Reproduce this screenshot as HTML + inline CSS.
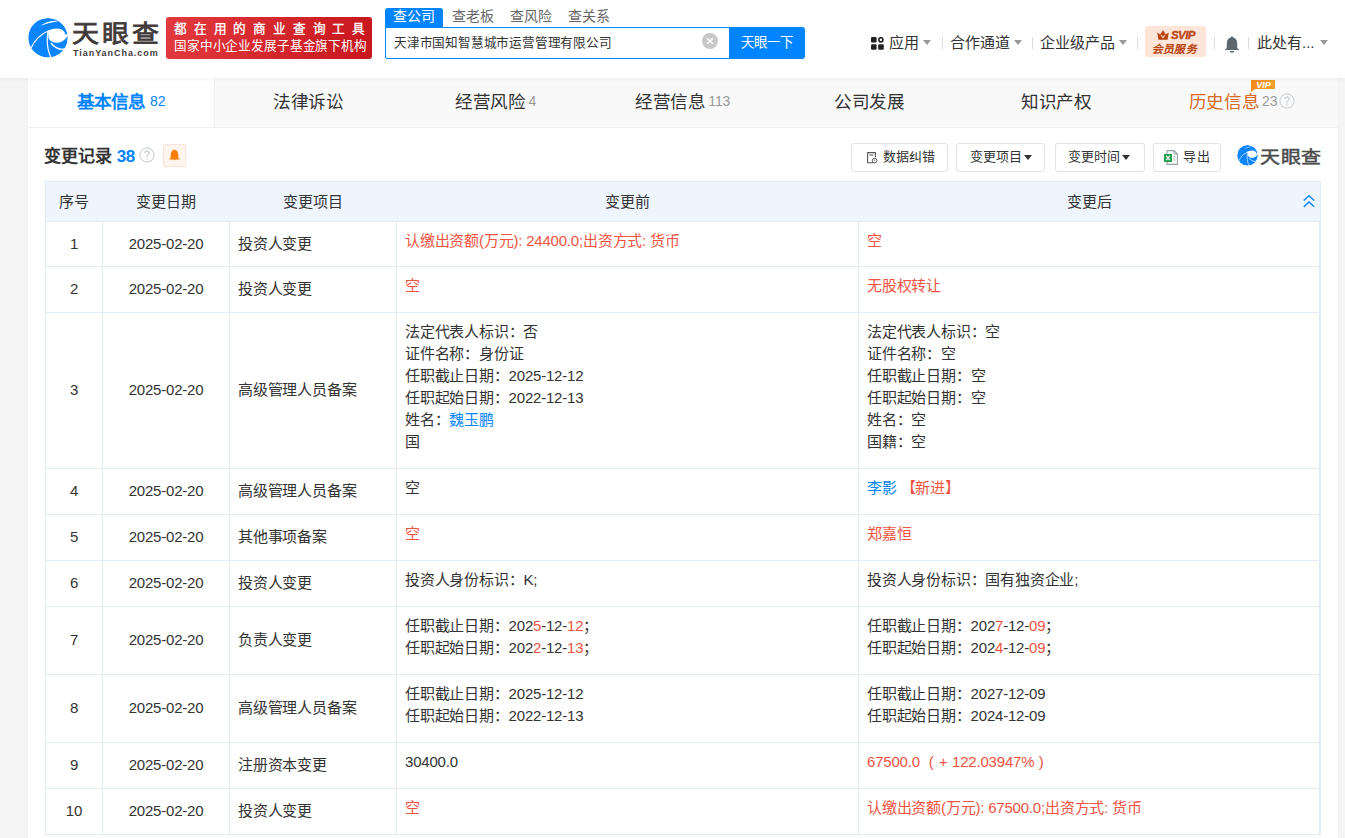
<!DOCTYPE html>
<html lang="zh-CN"><head><meta charset="utf-8">
<style>
*{box-sizing:border-box;margin:0;padding:0}
html,body{width:1345px;height:838px;overflow:hidden}
body{background:#f5f5f5;font-family:"Liberation Sans",sans-serif;color:#333;font-size:14px;position:relative}
.abs{position:absolute;white-space:nowrap}
#hdr{position:absolute;left:0;top:0;width:1345px;height:78px;background:#fff;box-shadow:0 1px 5px rgba(0,0,0,.06);z-index:2}
#wrap{position:absolute;left:28px;top:78px;width:1310px;height:760px;background:#fff;box-shadow:0 0 2px rgba(0,0,0,.06)}
#tabs{position:absolute;left:0;top:0;width:1310px;height:50px;background:#f9f9f9;border-bottom:1px solid #f0f0f0}
.tab{position:absolute;top:0;height:49px;line-height:48px;text-align:center;font-size:17.6px;color:#333;letter-spacing:-0.4px}
.tab .n{font-size:14px;color:#999;margin-left:3px;position:relative;top:-2px;letter-spacing:-0.2px}
.caret{width:0;height:0;border-left:4px solid transparent;border-right:4px solid transparent;border-top:5px solid #999}
.sep{width:1px;height:12px;background:#ddd}
.nav{font-size:15px;line-height:18px;color:#333}
table{position:absolute;left:17px;top:103px;border-collapse:collapse;table-layout:fixed;width:1275px}
td,th{border:1px solid #e3ecf5;font-size:15px;font-weight:normal;color:#333;letter-spacing:-0.2px}
th{background:#eef5fc;height:40px;border-left:none;border-right:none;line-height:20px}
td{line-height:22px;padding:8px 8px 15px 8px;vertical-align:top}
td.c{text-align:center;vertical-align:middle;padding:0 0 1px 0}
td.m{vertical-align:middle;padding:0 8px 1px 8px}
.red{color:#f0533f}
.blue{color:#0084ff}
.btn{position:absolute;top:65px;height:29px;border:1px solid #e3e3e3;border-radius:3px;background:#fff;font-size:13px;line-height:27px;color:#333}
.qm{width:15px;height:15px;border:1px solid #c9cdd3;border-radius:50%;color:#b7bcc2;font-size:11px;line-height:13px;text-align:center}
</style></head><body>
<svg width="0" height="0" style="position:absolute">
<defs>
<clipPath id="cc"><circle cx="23" cy="23.3" r="19.8"/></clipPath>
<symbol id="logo" viewBox="3 3.5 40 40">
<g clip-path="url(#cc)">
<circle cx="23" cy="23.3" r="19.8" fill="#0a84ff"/>
<path d="M15.5 11.2 Q24 5.2 34 6.4 Q24 8 15.5 11.2Z" fill="#fff"/>
<path d="M23 16.2 Q30 12.6 35.5 14.6 Q40.6 17 39.8 19.9 L46 19.2 L46 20 L43 21.3 Q38.5 27.8 32.5 28.3 Q26.5 28.4 23.5 24 Z" fill="#fff"/>
<path d="M6 33.5 Q12 21 24.2 16" stroke="#fff" stroke-width="1.2" fill="none"/>
<path d="M23 17 Q20.5 33 26.5 44" stroke="#fff" stroke-width="1.2" fill="none"/>
<path d="M26 28.5 Q30 34 37 35 Q40 35 43 32" stroke="#fff" stroke-width="1.3" fill="none"/>
</g>
</symbol>
</defs>
</svg>
<div id="hdr">
  <svg class="abs" style="left:28px;top:18px" width="40" height="40"><use href="#logo"/></svg>
  <div class="abs" style="left:72px;top:20px;font-size:27px;line-height:30px;color:#3f3a39;-webkit-text-stroke:0.9px #3f3a39;letter-spacing:3px;transform:scaleY(0.9);transform-origin:0 0">天眼查</div>
  <div class="abs" style="left:73px;top:48px;font-size:9px;line-height:10px;font-weight:bold;color:#3f3a39;letter-spacing:0.95px">TianYanCha.com</div>
  <div class="abs" style="left:166px;top:17px;width:206px;height:42px;border-radius:3px;background:linear-gradient(100deg,#e2393f,#c8161d)">
    <div class="abs" style="left:8px;top:4px;font-size:12.6px;line-height:16px;color:#fff;letter-spacing:6.8px;-webkit-text-stroke:0.3px #fff">都在用的商业查询工具</div>
    <div class="abs" style="left:8px;top:21px;font-size:12.6px;line-height:16px;color:#fff;letter-spacing:-0.15px">国家中小企业发展子基金旗下机构</div>
  </div>
  <!-- search -->
  <div class="abs" style="left:385px;top:8px;width:58px;height:20px;background:#0084ff;border-radius:3px 3px 0 0;color:#fff;font-size:14px;line-height:17px;text-align:center">查公司</div>
  <div class="abs" style="left:452px;top:8px;font-size:14px;line-height:17px;color:#666">查老板</div>
  <div class="abs" style="left:510px;top:8px;font-size:14px;line-height:17px;color:#666">查风险</div>
  <div class="abs" style="left:568px;top:8px;font-size:14px;line-height:17px;color:#666">查关系</div>
  <div class="abs" style="left:385px;top:27px;width:350px;height:32px;border:1px solid #0084ff;border-radius:2px;background:#fff"></div>
  <div class="abs" style="left:394px;top:34px;font-size:12.6px;line-height:18px;color:#333;letter-spacing:-0.2px">天津市国知智慧城市运营管理有限公司</div>
  <div class="abs" style="left:702px;top:33px;width:16px;height:16px;border-radius:50%;background:#c8c8c8"></div>
  <svg class="abs" style="left:702px;top:33px" width="16" height="16"><path d="M5.2 5.2L10.8 10.8M10.8 5.2L5.2 10.8" stroke="#fff" stroke-width="1.4"/></svg>
  <div class="abs" style="left:729px;top:27px;width:76px;height:32px;background:#0084ff;border-radius:0 3px 3px 0;color:#fff;font-size:13.5px;line-height:32px;text-align:center">天眼一下</div>
  <!-- right nav -->
  <svg class="abs" style="left:871px;top:37px" width="13" height="13" viewBox="0 0 13 13">
    <rect x="0" y="0" width="5.6" height="5.6" rx="1.3" fill="#222"/>
    <circle cx="9.9" cy="2.8" r="2.05" stroke="#1c1f23" stroke-width="1.6" fill="none"/>
    <rect x="0" y="7.2" width="5.6" height="5.6" rx="1.3" fill="#222"/>
    <rect x="7.2" y="7.2" width="5.6" height="5.6" rx="1.3" fill="#222"/>
  </svg>
  <div class="abs nav" style="left:889px;top:34px">应用</div>
  <div class="abs caret" style="left:923px;top:40px"></div>
  <div class="abs sep" style="left:942px;top:37px"></div>
  <div class="abs nav" style="left:950px;top:34px">合作通道</div>
  <div class="abs caret" style="left:1014px;top:40px"></div>
  <div class="abs sep" style="left:1032px;top:37px"></div>
  <div class="abs nav" style="left:1040px;top:34px">企业级产品</div>
  <div class="abs caret" style="left:1119px;top:40px"></div>
  <div class="abs sep" style="left:1137px;top:37px"></div>
  <div class="abs" style="left:1145px;top:26px;width:61px;height:31px;background:#ffe4d8;border-radius:3px"></div>
  <svg class="abs" style="left:1157px;top:30px" width="12" height="10" viewBox="0 0 12 10">
    <path d="M0.3 2.6 L3.2 4.6 L6 0.3 L8.8 4.6 L11.7 2.6 L10.6 9.7 L1.4 9.7Z" fill="#b8440f"/>
    <path d="M3.6 5.2 H5 L6 6.9 L7 5.2 H8.4 L6 8.6Z" fill="#ffe4d8"/>
  </svg>
  <div class="abs" style="left:1171px;top:29px;font-size:11.5px;line-height:12px;font-style:italic;font-weight:bold;color:#b8440f;letter-spacing:-0.6px;-webkit-text-stroke:0.3px #b8440f">SVIP</div>
  <div class="abs" style="left:1151px;top:43px;font-size:11px;line-height:13px;font-weight:bold;color:#b8440f;transform:skewX(-12deg);transform-origin:0 100%;letter-spacing:0.3px">会员服务</div>
  <div class="abs sep" style="left:1214px;top:37px"></div>
  <svg class="abs" style="left:1224px;top:36px" width="16" height="17" viewBox="0 0 16 17">
    <path d="M8 0.5 C8.8 0.5 9.2 1 9.2 1.6 C12 2.3 13.2 4.6 13.2 7.5 L13.2 12 L15.5 14 L0.5 14 L2.8 12 L2.8 7.5 C2.8 4.6 4 2.3 6.8 1.6 C6.8 1 7.2 0.5 8 0.5Z" fill="#5e6670"/>
    <rect x="5.8" y="15" width="4.4" height="1.6" rx="0.8" fill="#5e6670"/>
  </svg>
  <div class="abs sep" style="left:1248px;top:37px"></div>
  <div class="abs nav" style="left:1257px;top:34px">此处有...</div>
  <div class="abs caret" style="left:1320px;top:40px"></div>
</div>

<div id="wrap">
  <div id="tabs">
    <div class="tab" style="left:0;width:186px;background:#fff;color:#0084ff;font-weight:bold;letter-spacing:-0.9px">基本信息<span class="n" style="color:#0084ff;font-weight:normal;margin-left:5px">82</span></div>
    <div class="abs" style="left:186px;top:0;width:1px;height:49px;background:#f0f0f0"></div>
    <div class="tab" style="left:187px;width:187px">法律诉讼</div>
    <div class="tab" style="left:374px;width:187px">经营风险<span class="n">4</span></div>
    <div class="tab" style="left:561px;width:187px">经营信息<span class="n">113</span></div>
    <div class="tab" style="left:748px;width:187px">公司发展</div>
    <div class="tab" style="left:935px;width:187px">知识产权</div>
    <div class="tab" style="left:1122px;width:188px;color:#d86a1f;padding-right:0">历史信息<span class="n">23</span><span style="display:inline-block;width:22px"></span></div>
    <svg class="abs" style="left:1251px;top:15px" width="16" height="16" viewBox="0 0 16 16"><circle cx="8" cy="8" r="7.1" stroke="#c5cad1" stroke-width="1" fill="none"/><path d="M5.7 6.1 Q5.7 3.9 8 3.9 Q10.2 3.9 10.2 5.9 Q10.2 7.1 8.9 7.7 Q8 8.2 8 9.3 V10.2" stroke="#b9bec5" stroke-width="1" fill="none"/><circle cx="8" cy="11.9" r="0.65" fill="#b9bec5"/></svg>
    <svg class="abs" style="left:1223px;top:2px" width="24" height="12" viewBox="0 0 24 12">
      <defs><linearGradient id="vg" x1="0" x2="1"><stop offset="0" stop-color="#f08a1a"/><stop offset="1" stop-color="#f5a12f"/></linearGradient></defs>
      <path d="M0 0 H24 V9 H4 L0 12Z" fill="url(#vg)"/>
      <text x="12.5" y="8" font-family="Liberation Sans" font-size="9" font-weight="bold" font-style="italic" fill="#fff" text-anchor="middle">VIP</text>
    </svg>
  </div>

  <div class="abs" style="left:16px;top:68px;font-size:17px;font-weight:bold;color:#333;line-height:22px">变更记录 <span style="color:#0084ff;letter-spacing:-0.5px">38</span></div>
  <svg class="abs" style="left:111px;top:69px" width="16" height="16" viewBox="0 0 16 16"><circle cx="8" cy="8" r="7.1" stroke="#c5cad1" stroke-width="1" fill="none"/><path d="M5.7 6.1 Q5.7 3.9 8 3.9 Q10.2 3.9 10.2 5.9 Q10.2 7.1 8.9 7.7 Q8 8.2 8 9.3 V10.2" stroke="#b9bec5" stroke-width="1" fill="none"/><circle cx="8" cy="11.9" r="0.65" fill="#b9bec5"/></svg>
  <div class="abs" style="left:135px;top:66px;width:23px;height:23px;background:#fff5ee;border:1px solid #fde3d3;border-radius:2px"></div>
  <svg class="abs" style="left:141px;top:71px" width="11" height="13" viewBox="0 0 11 13">
    <path d="M5.5 0.3 C5.9 0.3 6.1 0.6 6.1 0.9 C8.4 1.4 9.3 3.3 9.3 5.6 L9.3 8.2 C9.3 8.9 9.9 9.5 10.7 9.8 L10.7 10.5 L0.3 10.5 L0.3 9.8 C1.1 9.5 1.7 8.9 1.7 8.2 L1.7 5.6 C1.7 3.3 2.6 1.4 4.9 0.9 C4.9 0.6 5.1 0.3 5.5 0.3Z" fill="#ff7d0a"/>
    <path d="M4.1 10.3 Q5.5 12.6 6.9 10.3Z" fill="#ff7d0a"/>
  </svg>

  <div class="btn" style="left:823px;width:97px">
    <svg class="abs" style="left:15px;top:8px" width="11" height="12" viewBox="0 0 11 12">
      <path d="M6.5 10.8 H0.6 V0.6 H8.4 V5.2" stroke="#555" stroke-width="1.1" fill="none"/>
      <path d="M2.4 3 H6.4" stroke="#555" stroke-width="1"/>
      <circle cx="7.6" cy="8.6" r="2.3" stroke="#555" stroke-width="1" fill="#fff"/>
      <path d="M7.6 7.6 V8.8" stroke="#555" stroke-width="0.9"/>
    </svg>
    <span class="abs" style="left:31px;top:-1px">数据纠错</span></div>
  <div class="btn" style="left:928px;width:89px"><span class="abs" style="left:13px;top:-1px">变更项目</span><div class="abs caret" style="left:67px;top:11px;border-top-color:#333"></div></div>
  <div class="btn" style="left:1027px;width:90px"><span class="abs" style="left:12px;top:-1px">变更时间</span><div class="abs caret" style="left:66px;top:11px;border-top-color:#333"></div></div>
  <div class="btn" style="left:1125px;width:68px">
    <svg class="abs" style="left:10px;top:6px" width="16" height="16" viewBox="0 0 16 16">
      <path d="M3 0.6 H10 L13.4 4 V14.4 H3Z" stroke="#9aa0a6" stroke-width="1.1" fill="#fff"/>
      <path d="M10 0.6 V4 H13.4" stroke="#9aa0a6" stroke-width="1" fill="none"/>
      <rect x="9.2" y="6" width="2.4" height="0.9" fill="#bbb"/><rect x="9.2" y="7.8" width="2.4" height="0.9" fill="#bbb"/><rect x="9.2" y="9.6" width="2.4" height="0.9" fill="#bbb"/>
      <rect x="0" y="4" width="8" height="8" fill="#1d9f4c"/>
      <path d="M2.2 5.8 L5.8 10.2 M5.8 5.8 L2.2 10.2" stroke="#fff" stroke-width="1.3"/>
    </svg>
    <span class="abs" style="left:29px;top:-1px;letter-spacing:1px">导出</span></div>
  <svg class="abs" style="left:1209px;top:67px" width="21" height="21"><use href="#logo"/></svg>
  <div class="abs" style="left:1232px;top:66px;font-size:20px;line-height:24px;color:#4c4c4c;-webkit-text-stroke:0.6px #4c4c4c;letter-spacing:0.5px;transform:scaleY(0.85);transform-origin:0 20px">天眼查</div>

  <table>
    <colgroup><col style="width:57px"><col style="width:127px"><col style="width:167px"><col style="width:462px"><col style="width:462px"></colgroup>
    <tr><th style="border-left:1px solid #e3ecf5">序号</th><th>变更日期</th><th>变更项目</th><th>变更前</th><th style="border-right:1px solid #e3ecf5">变更后</th></tr>
    <tr><td class="c">1</td><td class="c">2025-02-20</td><td class="m">投资人变更</td><td class="red" style="padding-bottom:14px">认缴出资额(万元): 24400.0;出资方式: 货币</td><td class="red" style="padding-bottom:14px">空</td></tr>
    <tr><td class="c">2</td><td class="c">2025-02-20</td><td class="m">投资人变更</td><td class="red">空</td><td class="red">无股权转让</td></tr>
    <tr><td class="c">3</td><td class="c">2025-02-20</td><td class="m">高级管理人员备案</td><td>法定代表人标识：否<br>证件名称：身份证<br>任职截止日期：2025-12-12<br>任职起始日期：2022-12-13<br>姓名：<span class="blue">魏玉鹏</span><br>国</td><td>法定代表人标识：空<br>证件名称：空<br>任职截止日期：空<br>任职起始日期：空<br>姓名：空<br>国籍：空</td></tr>
    <tr><td class="c">4</td><td class="c">2025-02-20</td><td class="m">高级管理人员备案</td><td>空</td><td><span class="blue">李影</span> <span class="red">【新进】</span></td></tr>
    <tr><td class="c">5</td><td class="c">2025-02-20</td><td class="m">其他事项备案</td><td class="red">空</td><td class="red">郑嘉恒</td></tr>
    <tr><td class="c">6</td><td class="c">2025-02-20</td><td class="m">投资人变更</td><td>投资人身份标识：K;</td><td>投资人身份标识：国有独资企业;</td></tr>
    <tr><td class="c">7</td><td class="c">2025-02-20</td><td class="m">负责人变更</td><td>任职截止日期：202<span class="red">5</span>-12-<span class="red">12</span>；<br>任职起始日期：202<span class="red">2</span>-12-<span class="red">13</span>；</td><td>任职截止日期：202<span class="red">7</span>-12-<span class="red">09</span>；<br>任职起始日期：202<span class="red">4</span>-12-<span class="red">09</span>；</td></tr>
    <tr><td class="c">8</td><td class="c">2025-02-20</td><td class="m">高级管理人员备案</td><td>任职截止日期：2025-12-12<br>任职起始日期：2022-12-13</td><td>任职截止日期：2027-12-09<br>任职起始日期：2024-12-09</td></tr>
    <tr><td class="c">9</td><td class="c">2025-02-20</td><td class="m">注册资本变更</td><td>30400.0</td><td class="red">67500.0&nbsp;&nbsp;<span style="margin-left:1px">(</span><span style="margin-left:1.5px">&nbsp;+</span>&nbsp;<span style="margin-left:0.5px">122.03947%</span>&nbsp;<span style="margin-left:0.5px">)</span></td></tr>
    <tr><td class="c">10</td><td class="c">2025-02-20</td><td class="m">投资人变更</td><td class="red">空</td><td class="red">认缴出资额(万元): 67500.0;出资方式: 货币</td></tr>
  </table>
  <div class="abs" style="left:1291px;top:144px;width:1px;height:613px;background:#e3ecf5"></div>
  <svg class="abs" style="left:1275px;top:117px" width="12" height="13" viewBox="0 0 12 13">
    <path d="M0.8 5.5 L6 0.8 L11.2 5.5 M0.8 11.8 L6 7 L11.2 11.8" stroke="#0084ff" stroke-width="1.4" fill="none"/>
  </svg>
</div>
</body></html>
